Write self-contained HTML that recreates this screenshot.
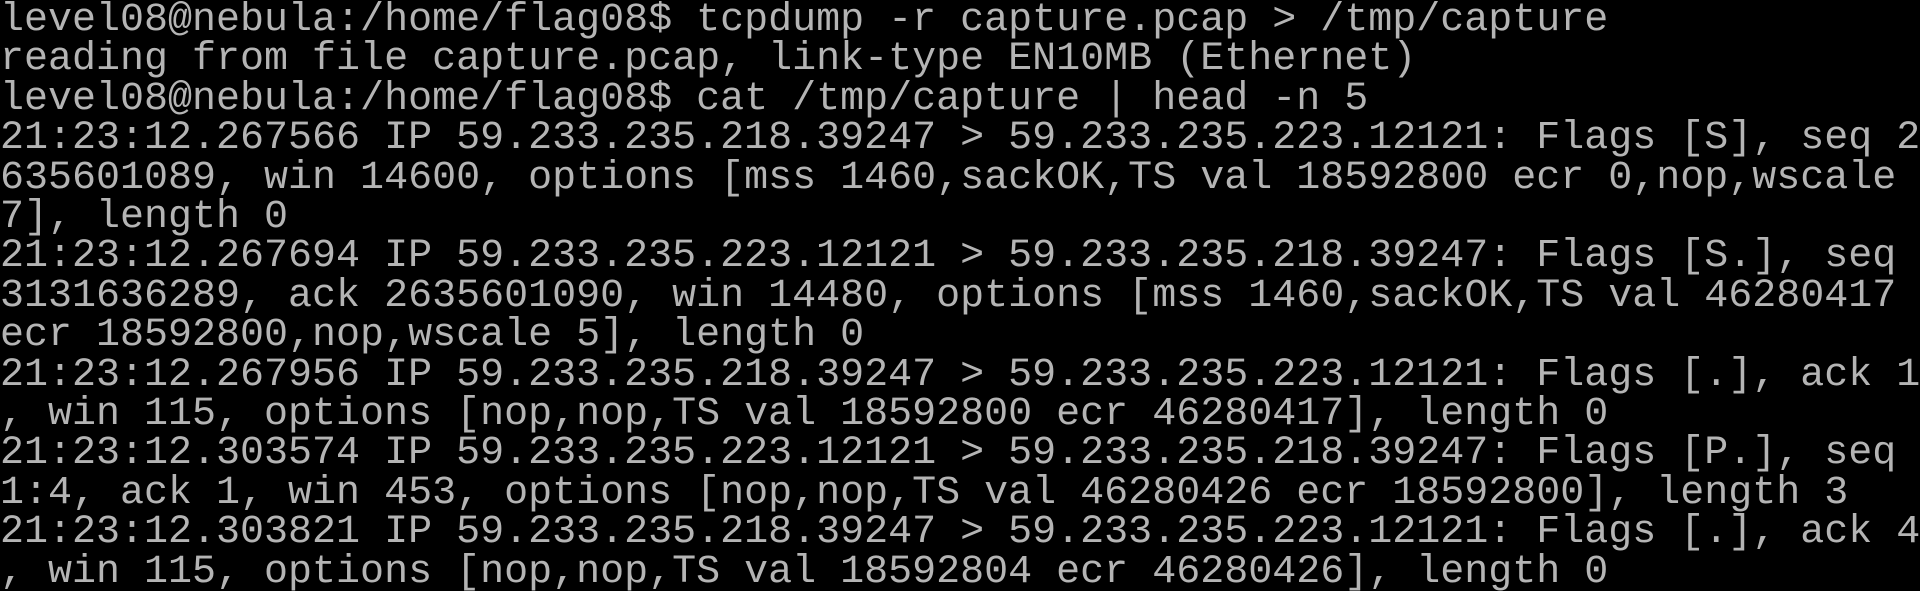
<!DOCTYPE html>
<html><head><meta charset="utf-8"><style>
html,body{margin:0;padding:0;background:#000;width:1920px;height:591px;overflow:hidden}
pre{margin:0;position:relative;top:1px;left:0;font-family:"Liberation Mono","DejaVu Sans Mono",monospace;font-size:40px;line-height:39.4px;color:#b4b4b4;white-space:pre}
</style></head><body><pre>level08@nebula:/home/flag08$ tcpdump -r capture.pcap &gt; /tmp/capture
reading from file capture.pcap, link-type EN10MB (Ethernet)
level08@nebula:/home/flag08$ cat /tmp/capture | head -n 5
21:23:12.267566 IP 59.233.235.218.39247 &gt; 59.233.235.223.12121: Flags [S], seq 2
635601089, win 14600, options [mss 1460,sackOK,TS val 18592800 ecr 0,nop,wscale
7], length 0
21:23:12.267694 IP 59.233.235.223.12121 &gt; 59.233.235.218.39247: Flags [S.], seq
3131636289, ack 2635601090, win 14480, options [mss 1460,sackOK,TS val 46280417
ecr 18592800,nop,wscale 5], length 0
21:23:12.267956 IP 59.233.235.218.39247 &gt; 59.233.235.223.12121: Flags [.], ack 1
, win 115, options [nop,nop,TS val 18592800 ecr 46280417], length 0
21:23:12.303574 IP 59.233.235.223.12121 &gt; 59.233.235.218.39247: Flags [P.], seq
1:4, ack 1, win 453, options [nop,nop,TS val 46280426 ecr 18592800], length 3
21:23:12.303821 IP 59.233.235.218.39247 &gt; 59.233.235.223.12121: Flags [.], ack 4
, win 115, options [nop,nop,TS val 18592804 ecr 46280426], length 0</pre></body></html>
